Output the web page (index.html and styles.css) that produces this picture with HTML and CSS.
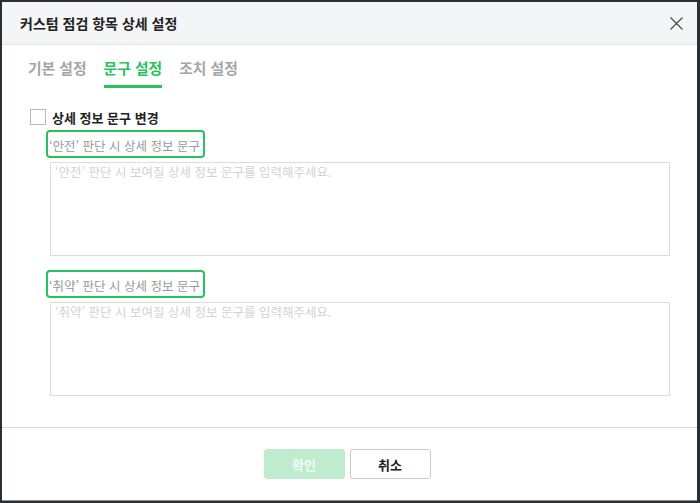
FILE: index.html
```html
<!DOCTYPE html>
<html lang="ko">
<head>
  <meta charset="UTF-8">
  <title>커스텀 점검 항목 상세 설정</title>
  <link rel="stylesheet" href="styles.css">
</head>
<body>
  <div class="dialog">
    <div class="dialog-header">
      <h1>커스텀 점검 항목 상세 설정</h1>
      <button type="button" class="close-btn" aria-label="닫기">
        <svg width="13" height="13" viewBox="0 0 13 13"><path d="M0.5 0.5L12.5 12.5M12.5 0.5L0.5 12.5" stroke="#444" stroke-width="1.1" fill="none"/></svg>
      </button>
    </div>

    <div class="dialog-body">
      <div class="tabs">
        <span class="tab">기본 설정</span>
        <span class="tab active">문구 설정</span>
        <span class="tab">조치 설정</span>
      </div>

      <label class="check-row">
        <span class="checkbox"></span>
        <span>상세 정보 문구 변경</span>
      </label>

      <div class="msg-group">
        <div class="msg-label">‘안전’ 판단 시 상세 정보 문구</div>
        <textarea placeholder="‘안전’ 판단 시 보여질 상세 정보 문구를 입력해주세요." disabled></textarea>
      </div>

      <div class="msg-group">
        <div class="msg-label">‘취약’ 판단 시 상세 정보 문구</div>
        <textarea placeholder="‘취약’ 판단 시 보여질 상세 정보 문구를 입력해주세요." disabled></textarea>
      </div>
    </div>

    <div class="dialog-footer">
      <button type="button" class="btn btn-primary">확인</button>
      <button type="button" class="btn btn-secondary">취소</button>
    </div>
  </div>
</body>
</html>
```

FILE: styles.css
```css
html, body {
  margin: 0;
  padding: 0;
  height: 100%;
}

body {
  background: #2a2e35;
  font-family: "Noto Sans CJK KR", "Noto Sans", sans-serif;
  color: #222;
  padding: 2px 3px 2px 2px;
  box-sizing: border-box;
}

.dialog {
  background: #fff;
  height: 498px;
  display: flex;
  flex-direction: column;
  border-bottom: 1px solid #8a8d92;
}

.dialog-header {
  height: 42px;
  flex-shrink: 0;
  background: #f4f5f7;
  border-bottom: 1px solid #e4e5e8;
  display: flex;
  align-items: center;
  justify-content: space-between;
  padding: 0 14px 0 18px;
}

.dialog-header h1 {
  margin: 0;
  font-size: 14px;
  font-weight: 700;
  color: #222;
}

.close-btn {
  border: none;
  background: none;
  padding: 0;
  width: 13px;
  height: 13px;
  display: flex;
  cursor: pointer;
}

.dialog-body {
  flex: 1;
  padding: 0 28px;
}

.tabs {
  display: flex;
  gap: 17px;
  height: 43px;
  margin-bottom: 21px;
  margin-left: -2px;
}

.tab {
  font-size: 14.8px;
  font-weight: 700;
  color: #a2a5a9;
  padding-top: 12px;
  box-sizing: border-box;
  height: 43px;
}

.tab.active {
  color: #27c35f;
  border-bottom: 3px solid #27c35f;
}

.check-row {
  display: flex;
  align-items: center;
  gap: 6px;
  font-size: 13px;
  font-weight: 700;
  color: #222;
  height: 16px;
}

.checkbox {
  width: 14px;
  height: 14px;
  border: 1px solid #b4b6b9;
  background: #fff;
}

.msg-group {
  margin-left: 16px;
}

.msg-group + .msg-group {
  margin-top: 14px;
}

.check-row + .msg-group {
  margin-top: 5px;
}

.msg-label {
  display: inline-block;
  border: 2px solid #27c35f;
  border-radius: 4px;
  padding: 0 3px 0 1px;
  height: 28px;
  line-height: 27px;
  box-sizing: border-box;
  font-size: 12.5px;
  color: #999;
  margin-bottom: 4px;
}

textarea {
  display: block;
  width: calc(100% - 3px);
  margin-left: 4px;
  height: 94px;
  box-sizing: border-box;
  border: 1px solid #dcdcdc;
  background: #fff;
  resize: none;
  padding: 1px 4px;
  font-family: inherit;
  font-size: 12.5px;
  line-height: 16px;
}

textarea::placeholder {
  color: #d2d2d2;
}

.dialog-footer {
  height: 73px;
  flex-shrink: 0;
  border-top: 1px solid #d8d9db;
  display: flex;
  justify-content: center;
  align-items: flex-start;
  gap: 5px;
  padding: 21px 5px 0 0;
  box-sizing: border-box;
}

.btn {
  width: 81px;
  height: 30px;
  border-radius: 3px;
  font-family: inherit;
  font-size: 13px;
  font-weight: 700;
  cursor: pointer;
}

.btn-primary {
  background: #bfeccf;
  border: 1px solid #bfeccf;
  color: #f4fbf6;
}

.btn-secondary {
  background: #fff;
  border: 1px solid #c8c9cc;
  color: #222;
}
```
